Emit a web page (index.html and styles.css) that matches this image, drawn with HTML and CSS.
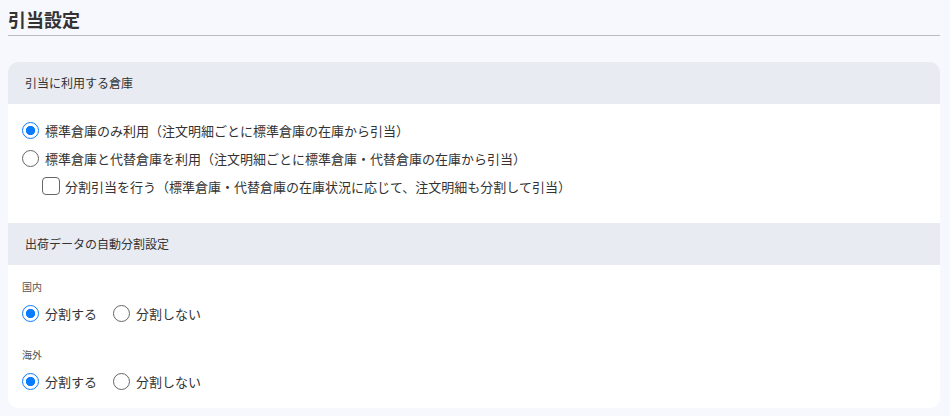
FILE: index.html
```html
<!DOCTYPE html>
<html lang="ja">
<head>
<meta charset="utf-8">
<title>引当設定</title>
<link rel="stylesheet" href="styles.css">
</head>
<body>
<h1 class="page-title">引当設定</h1>
<div class="card">
  <div class="section-head">引当に利用する倉庫</div>
  <div class="section-body first">
    <label class="row"><input type="radio" name="wh" checked><span>標準倉庫のみ利用（注文明細ごとに標準倉庫の在庫から引当）</span></label>
    <label class="row"><input type="radio" name="wh"><span>標準倉庫と代替倉庫を利用（注文明細ごとに標準倉庫・代替倉庫の在庫から引当）</span></label>
    <label class="row sub"><input type="checkbox"><span>分割引当を行う（標準倉庫・代替倉庫の在庫状況に応じて、注文明細も分割して引当）</span></label>
  </div>
  <div class="section-head">出荷データの自動分割設定</div>
  <div class="section-body second">
    <div class="group">
      <div class="group-label">国内</div>
      <div class="options">
        <label class="row"><input type="radio" name="dom" checked><span>分割する</span></label>
        <label class="row"><input type="radio" name="dom"><span>分割しない</span></label>
      </div>
    </div>
    <div class="group">
      <div class="group-label">海外</div>
      <div class="options">
        <label class="row"><input type="radio" name="ovs" checked><span>分割する</span></label>
        <label class="row"><input type="radio" name="ovs"><span>分割しない</span></label>
      </div>
    </div>
  </div>
</div>
</body>
</html>
```
FILE: styles.css
```css
html, body {
  background: #f7f8fd;
}
body {
  margin: 8px 10px 8px 8px;
  font-family: "Noto Sans CJK JP", "Noto Sans", sans-serif;
  color: #333;
}
.page-title {
  margin: 0;
  font-size: 18px;
  font-weight: 700;
  line-height: 22px;
  padding-bottom: 5px;
  border-bottom: 1px solid #b9bcc4;
  color: #333;
}
.card {
  margin-top: 26px;
  background: #fff;
  border-radius: 10px;
  overflow: hidden;
}
.section-head {
  height: 42px;
  line-height: 42px;
  padding-left: 17px;
  background: #e8ebf2;
  font-size: 12px;
  color: #333;
}
.section-body {
  padding-left: 14px;
}
.section-body.first {
  padding-top: 12px;
  padding-bottom: 23px;
}
.section-body.second {
  padding-top: 14px;
  padding-bottom: 13px;
  display: flex;
  flex-direction: column;
  gap: 20px;
}
.row {
  display: flex;
  align-items: center;
  height: 28px;
  font-size: 13px;
  color: #333;
  cursor: pointer;
}
.row input[type="radio"] {
  appearance: none;
  -webkit-appearance: none;
  box-sizing: border-box;
  width: 17px;
  height: 17px;
  margin: 0 6px 0 0;
  border: 1.3px solid #666;
  border-radius: 50%;
  background: #fff;
  flex: none;
}
.row input[type="radio"]:checked {
  border: 1.6px solid #0a7cff;
  background: radial-gradient(circle, #0a7cff 0, #0a7cff 4.3px, #fff 5px);
}
.row.sub {
  padding-left: 20px;
}
.row input[type="checkbox"] {
  appearance: none;
  -webkit-appearance: none;
  box-sizing: border-box;
  width: 18px;
  height: 18px;
  margin: 0 5px 0 0;
  border: 1.3px solid #666;
  border-radius: 4px;
  background: #fff;
  flex: none;
}
.group-label {
  font-size: 10px;
  line-height: 16px;
  color: #555;
  margin-bottom: 4px;
}
.options {
  display: flex;
  gap: 16px;
}
```
